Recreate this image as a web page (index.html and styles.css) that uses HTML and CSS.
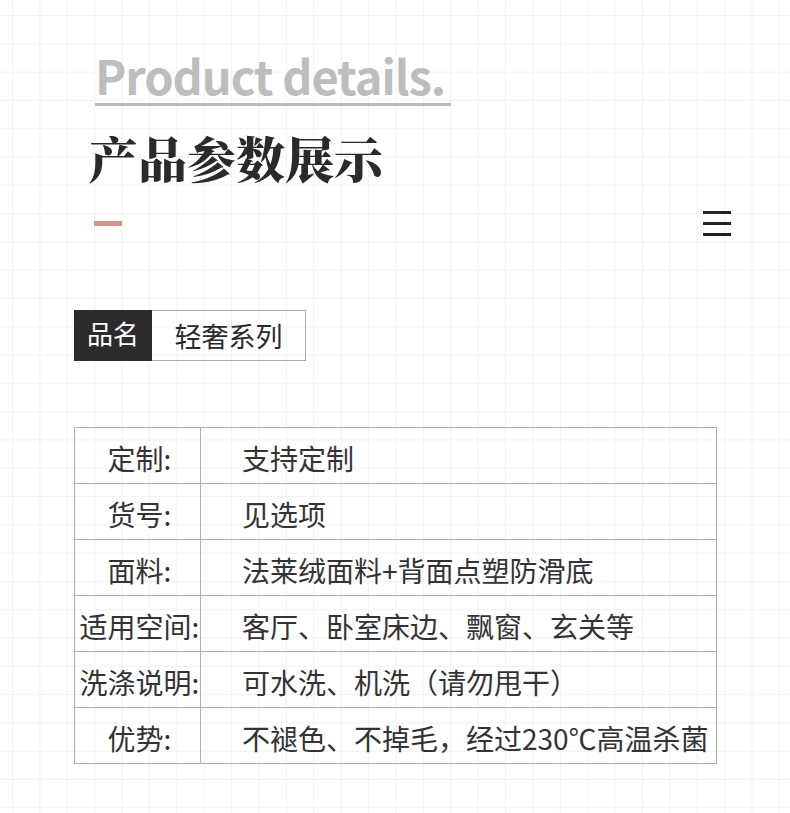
FILE: index.html
```html
<!DOCTYPE html>
<html>
<head>
  <meta charset="UTF-8">
  <title>产品参数展示</title>
  <link rel="stylesheet" href="styles.css">
</head>
<body>
  <div class="page">

    <!-- Heading -->
    <div class="head">
      <div class="en">Product details.</div>
      <h1 class="cn">产品参数展示</h1>
      <div class="deco">
        <span class="accent"></span>
        <span class="menu"><i></i><i></i><i></i></span>
      </div>
    </div>

    <!-- Product name -->
    <div class="name">
      <div class="name-key">品名</div>
      <div class="name-val">轻奢系列</div>
    </div>

    <!-- Parameters -->
    <table class="spec">
      <tr><td class="key">定制:</td><td class="val">支持定制</td></tr>
      <tr><td class="key">货号:</td><td class="val">见选项</td></tr>
      <tr><td class="key">面料:</td><td class="val">法莱绒面料+背面点塑防滑底</td></tr>
      <tr><td class="key">适用空间:</td><td class="val">客厅、卧室床边、飘窗、玄关等</td></tr>
      <tr><td class="key">洗涤说明:</td><td class="val">可水洗、机洗（请勿甩干）</td></tr>
      <tr><td class="key">优势:</td><td class="val">不褪色、不掉毛，经过230℃高温杀菌</td></tr>
    </table>

  </div>
</body>
</html>
```

FILE: styles.css
```css
body {
  margin: 0;
  background-color: #fff;
  background-image:
    linear-gradient(#f2f2f2 1px, transparent 1px),
    linear-gradient(90deg, #f2f2f2 1px, transparent 1px);
  background-size: 27.4px 28.3px;
  background-position: 12px 15px;
  font-family: "Noto Sans CJK SC", sans-serif;
  color: #333;
}
.page { padding: 50px 59px 40px 74px; }

.en {
  display: inline-block;
  margin-left: 21px;
  padding: 0 6px 4px 0;
  border-bottom: 3px solid #bdbdbd;
  font-size: 47px;
  font-weight: 700;
  line-height: 49px;
  letter-spacing: -1.05px;
  color: #bdbdbd;
}
.cn {
  margin: 26px 0 0 15px;
  font-family: "Noto Serif CJK SC", "Noto Sans CJK SC", serif;
  font-size: 49px;
  font-weight: 900;
  line-height: 50px;
  color: #2a2a2a;
}
.deco {
  display: flex;
  justify-content: space-between;
  align-items: center;
  margin-top: 29px;
  padding-left: 20px;
}
.accent { width: 28px; height: 5px; background: #d4948a; }
.menu { display: flex; flex-direction: column; gap: 8px; width: 28px; }
.menu i { display: block; height: 3px; background: #222; }

.name { display: flex; height: 51px; margin-top: 74px; }
.name-key {
  width: 78px;
  background: #2b2b2b;
  color: #fff;
  font-size: 26px;
  line-height: 46px;
  text-align: center;
}
.name-val {
  box-sizing: border-box;
  width: 154px;
  border: 1px solid #aaa;
  border-left: 0;
  font-size: 27px;
  line-height: 50px;
  text-align: center;
  color: #2a2a2a;
}

.spec {
  width: 643px;
  margin-top: 66px;
  border-collapse: collapse;
  font-size: 28px;
}
.spec td {
  height: 51px;
  padding: 4px 0 0;
  border: 1px solid #adadad;
  line-height: 40px;
  white-space: nowrap;
}
.spec .key { width: 121px; padding-left: 4px; text-align: center; }
.spec .val { padding-left: 41px; }
```
